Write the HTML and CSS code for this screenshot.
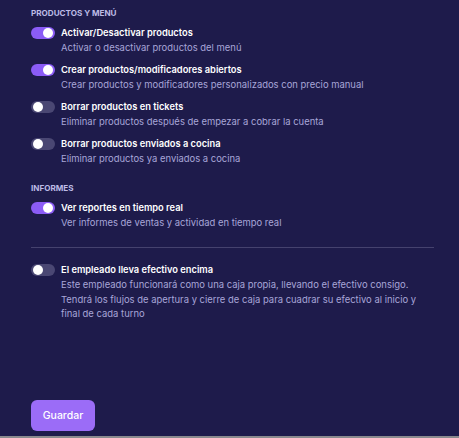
FILE: index.html
```html
<!DOCTYPE html>
<html lang="es">
<head>
<meta charset="utf-8">
<link rel="stylesheet" href="styles.css">
</head>
<body>
<div class="page">
  <div class="content">
    <section class="group">
      <h3 class="group-title">PRODUCTOS Y MENÚ</h3>
      <div class="item">
        <span class="toggle on"><span class="knob"></span></span>
        <div class="text">
          <div class="title">Activar/Desactivar productos</div>
          <div class="desc">Activar o desactivar productos del menú</div>
        </div>
      </div>
      <div class="item">
        <span class="toggle on"><span class="knob"></span></span>
        <div class="text">
          <div class="title">Crear productos/modificadores abiertos</div>
          <div class="desc">Crear productos y modificadores personalizados con precio manual</div>
        </div>
      </div>
      <div class="item">
        <span class="toggle"><span class="knob"></span></span>
        <div class="text">
          <div class="title">Borrar productos en tickets</div>
          <div class="desc">Eliminar productos después de empezar a cobrar la cuenta</div>
        </div>
      </div>
      <div class="item">
        <span class="toggle"><span class="knob"></span></span>
        <div class="text">
          <div class="title">Borrar productos enviados a cocina</div>
          <div class="desc">Eliminar productos ya enviados a cocina</div>
        </div>
      </div>
    </section>
    <section class="group">
      <h3 class="group-title">INFORMES</h3>
      <div class="item">
        <span class="toggle on"><span class="knob"></span></span>
        <div class="text">
          <div class="title">Ver reportes en tiempo real</div>
          <div class="desc">Ver informes de ventas y actividad en tiempo real</div>
        </div>
      </div>
    </section>
    <hr class="divider">
    <div class="item">
      <span class="toggle"><span class="knob"></span></span>
      <div class="text">
        <div class="title">El empleado lleva efectivo encima</div>
        <div class="desc long">Este empleado funcionará como una caja propia, llevando el efectivo consigo. Tendrá los flujos de apertura y cierre de caja para cuadrar su efectivo al inicio y final de cada turno</div>
      </div>
    </div>
  </div>
  <div class="footer">
    <button class="btn">Guardar</button>
  </div>
</div>
</body>
</html>
```
FILE: styles.css
```css
* { box-sizing: border-box; }
html, body { margin: 0; padding: 0; }
body {
  background: #8a8a8e;
  font-family: Inter, "Noto Sans", sans-serif;
  width: 459px;
  height: 438px;
  overflow: hidden;
}
.page {
  height: 436px;
  background: #1e1b4b;
  display: flex;
  flex-direction: column;
  padding: 7px 25px 5px 31px;
}
.content { display: flex; flex-direction: column; }
.group { display: flex; flex-direction: column; gap: 7px; margin-bottom: 16px; }
.group-title {
  margin: 0;
  font-size: 8.1px;
  line-height: 12px;
  font-weight: 700;
  color: #bdbbe6;
  margin-bottom: -1px;
}
.item { display: flex; gap: 6px; align-items: flex-start; }
.toggle {
  flex: none;
  width: 24px;
  height: 12px;
  border-radius: 6px;
  background: #4a4773;
  margin-top: 1.5px;
  position: relative;
}
.toggle.on { background: #8b5cf6; }
.knob {
  position: absolute;
  top: 1px;
  left: 2px;
  width: 10px;
  height: 10px;
  border-radius: 50%;
  background: #fff;
}
.toggle.on .knob { left: 12px; }
.text { display: flex; flex-direction: column; }
.title {
  font-size: 9.3px;
  line-height: 15px;
  font-weight: 600;
  color: #ffffff;
}
.desc {
  font-size: 9.45px;
  line-height: 15px;
  color: #a8a6d8;
}
.desc.long { line-height: 14.5px; margin-top: 1px; }
.divider {
  border: 0;
  border-top: 1px solid #45426e;
  margin: 1px 0 14px 0;
}
.footer { margin-top: auto; }
.btn {
  font-family: Inter, "Noto Sans", sans-serif;
  width: 64px;
  height: 31px;
  border: 0;
  border-radius: 6px;
  background: #9b6cf7;
  color: #fff;
  font-size: 10.5px;
  font-weight: 500;
  padding: 0;
}
```
